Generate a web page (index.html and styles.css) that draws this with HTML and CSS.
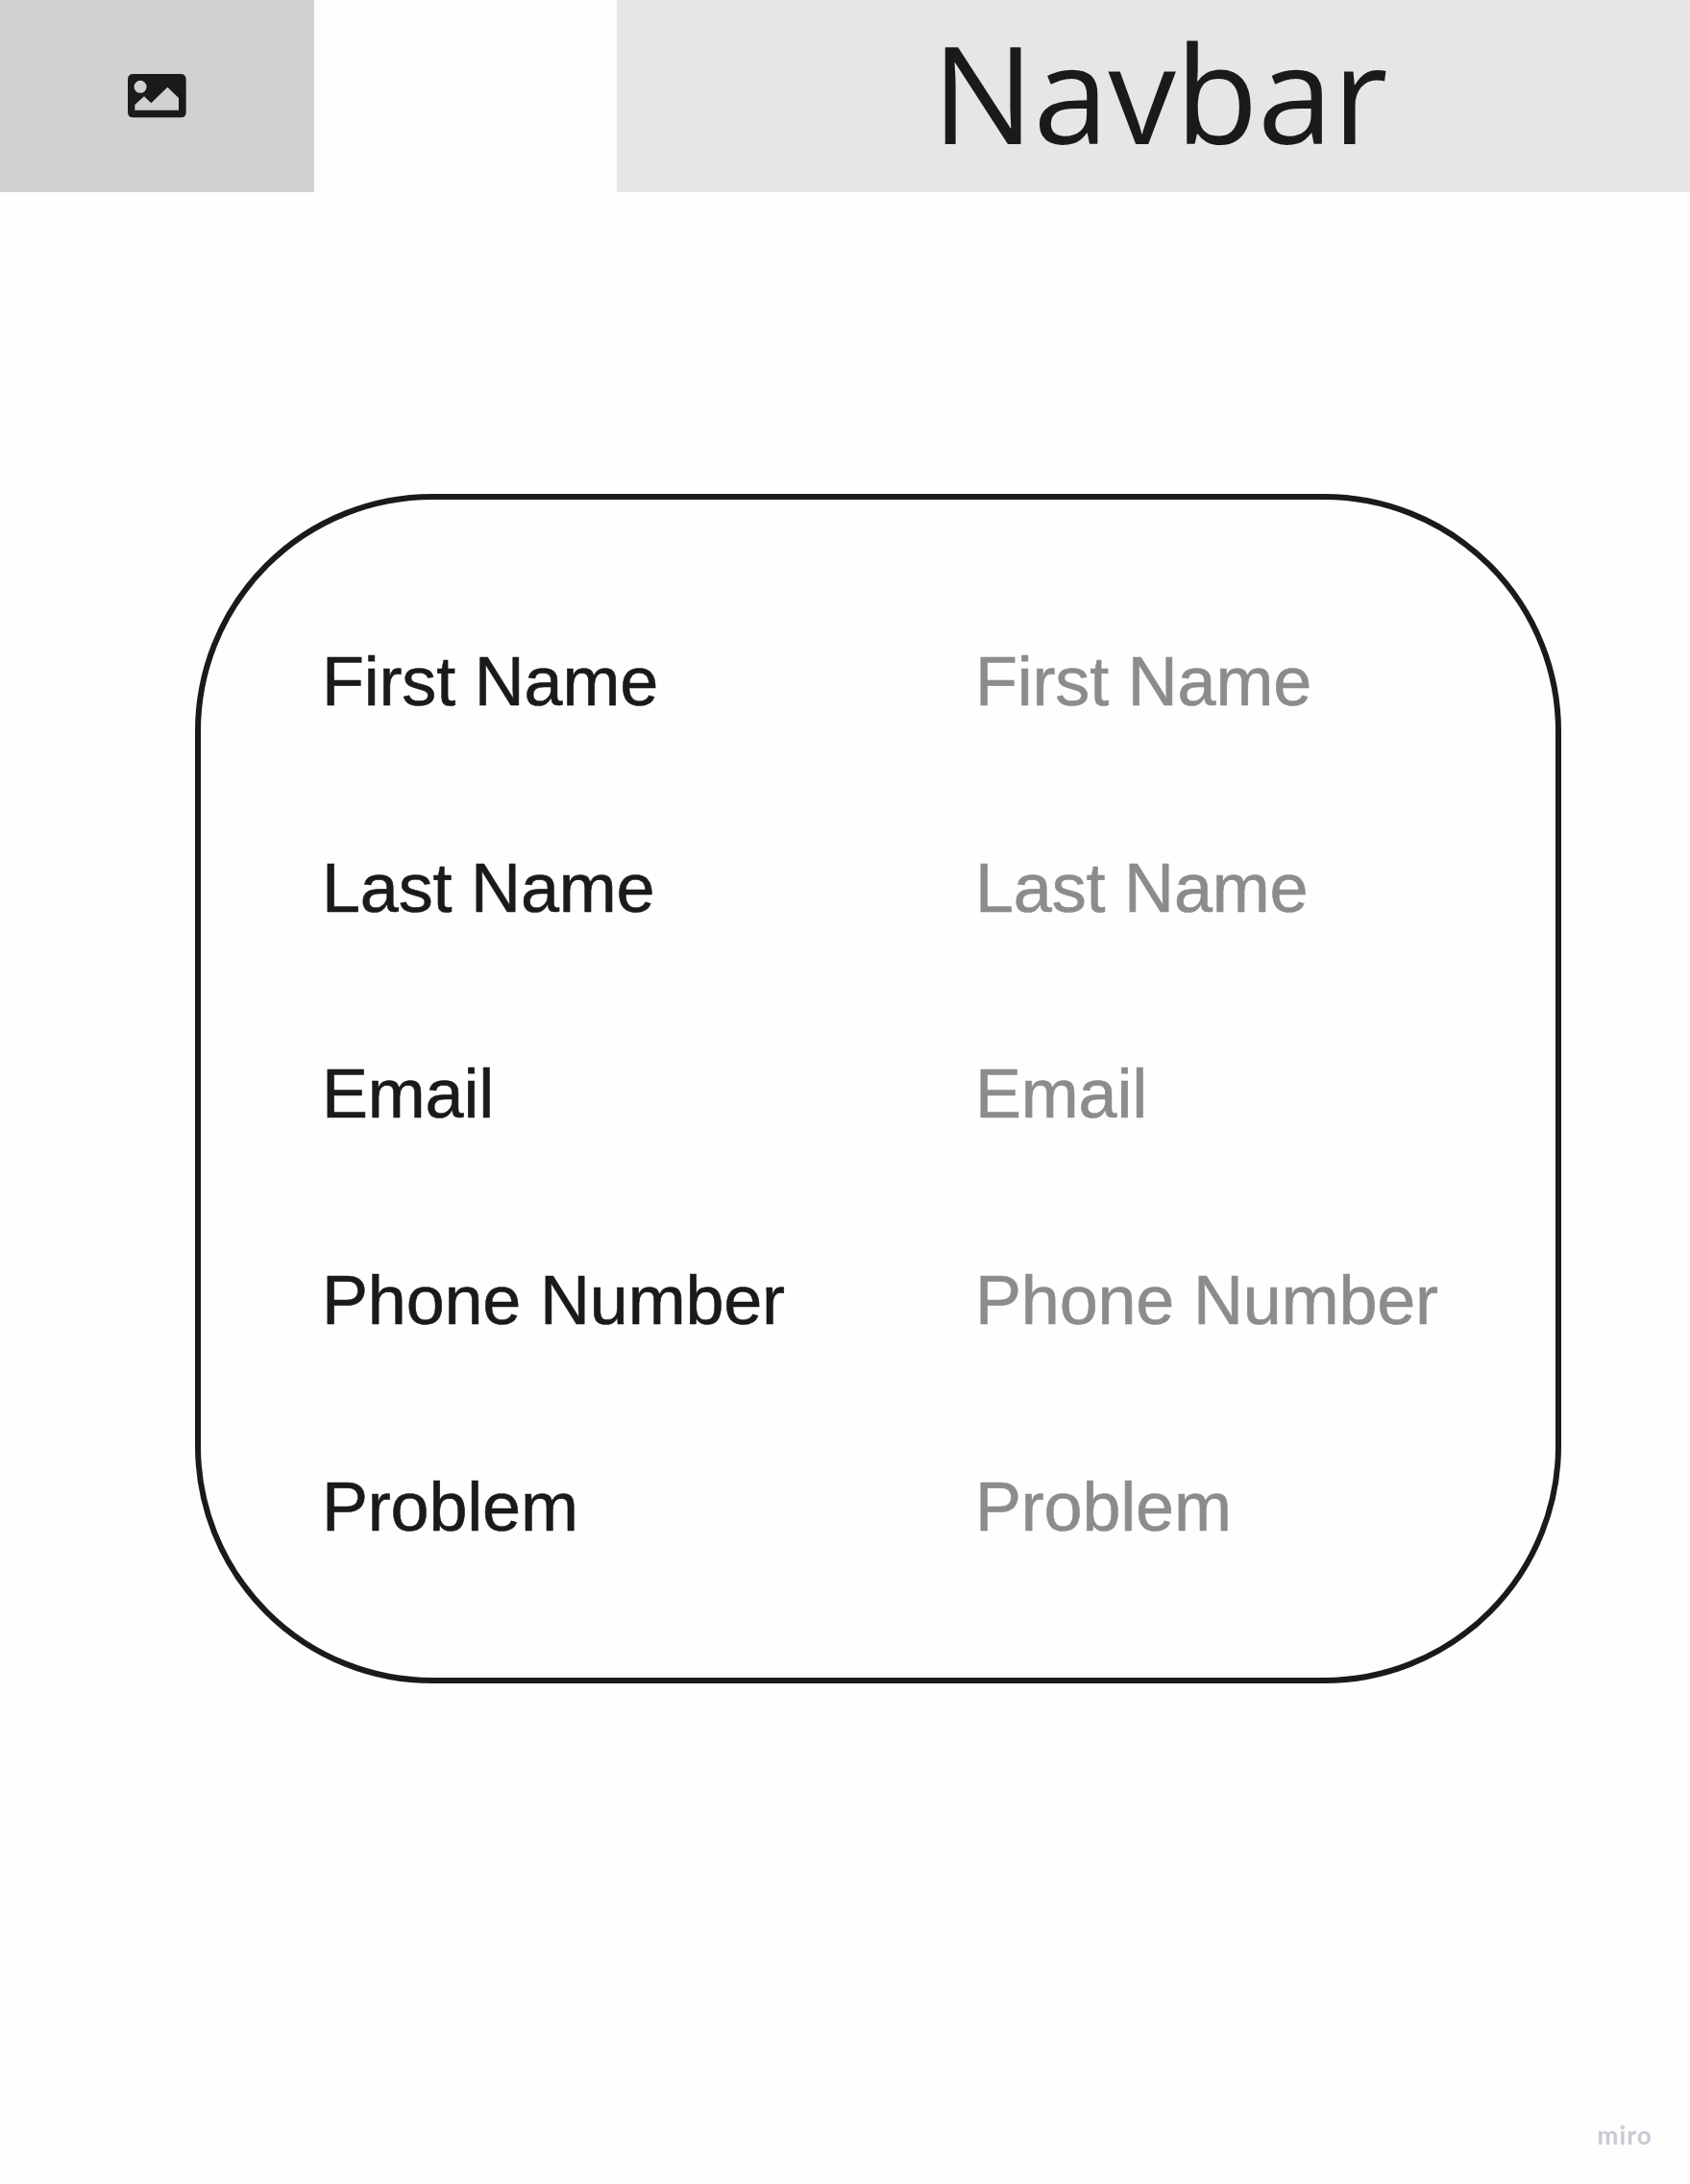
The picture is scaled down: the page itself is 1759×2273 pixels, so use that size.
FILE: index.html
```html
<!DOCTYPE html>
<html lang="en">
<head>
<meta charset="utf-8">
<title>Contact form wireframe</title>
<link rel="stylesheet" href="styles.css">
</head>
<body>
<div class="page">
  <header class="header">
    <div class="logo">
      <svg class="logo-icon" viewBox="70 51 182 136" aria-hidden="true">
        <path fill="#1a1a1a" fill-rule="evenodd" d="M87 51H235Q252 51 252 68V170Q252 187 235 187H87Q70 187 70 170V68Q70 51 87 51ZM109 71.500A19.500 19.500 0 1 0 109 110.500A19.500 19.500 0 1 0 109 71.500ZM92 147L121 121L143 142L194 92L229 126V164H92Z"/>
      </svg>
    </div>
    <nav class="navbar"><span class="navbar-title">Navbar</span></nav>
  </header>
  <main class="card">
    <div class="row"><span class="label">First Name</span><span class="field">First Name</span></div>
    <div class="row"><span class="label">Last Name</span><span class="field">Last Name</span></div>
    <div class="row"><span class="label">Email</span><span class="field">Email</span></div>
    <div class="row"><span class="label">Phone Number</span><span class="field">Phone Number</span></div>
    <div class="row"><span class="label">Problem</span><span class="field">Problem</span></div>
  </main>
  <footer class="footer">miro</footer>
</div>
</body>
</html>
```

FILE: styles.css
```css
* { box-sizing: border-box; }

body {
  margin: 0;
  background: #fefefe;
  color: #1a1a1a;
}

.page {
  display: flex;
  flex-direction: column;
  width: 1759px;
  height: 2273px;
  overflow: hidden;
}

.header {
  display: flex;
  justify-content: space-between;
  height: 200px;
  flex: none;
}

.logo {
  display: flex;
  align-items: center;
  justify-content: center;
  width: 327px;
  background: #d1d1d1;
}

.logo-icon {
  display: block;
  width: 60.7px;
  height: 45.3px;
}

.navbar {
  display: flex;
  align-items: flex-start;
  justify-content: center;
  width: 1117px;
  padding-left: 13px;
  background: #e6e6e6;
}

.navbar-title {
  font: 141px/190px "Open Sans", "Noto Sans", sans-serif;
  letter-spacing: -0.5px;
}

.card {
  flex: none;
  width: 1422px;
  height: 1238px;
  margin: 314px 0 0 203px;
  padding: 81.6px 0 0 126px;
  border: 6px solid #1a1a1a;
  border-radius: 247px;
}

.row {
  display: grid;
  grid-template-columns: 680px 1fr;
  height: 214.9px;
  align-items: center;
  font: 72px/1.4 "Liberation Sans", Arial, sans-serif;
  letter-spacing: -0.2px;
  -webkit-text-stroke: 0.6px currentColor;
  white-space: nowrap;
}

.field { color: #8c8c8c; }

.footer {
  margin: auto 39px 34px auto;
  color: #c9c9d2;
  font: bold 26px/34px Lato, sans-serif;
  letter-spacing: 1.2px;
}
```
